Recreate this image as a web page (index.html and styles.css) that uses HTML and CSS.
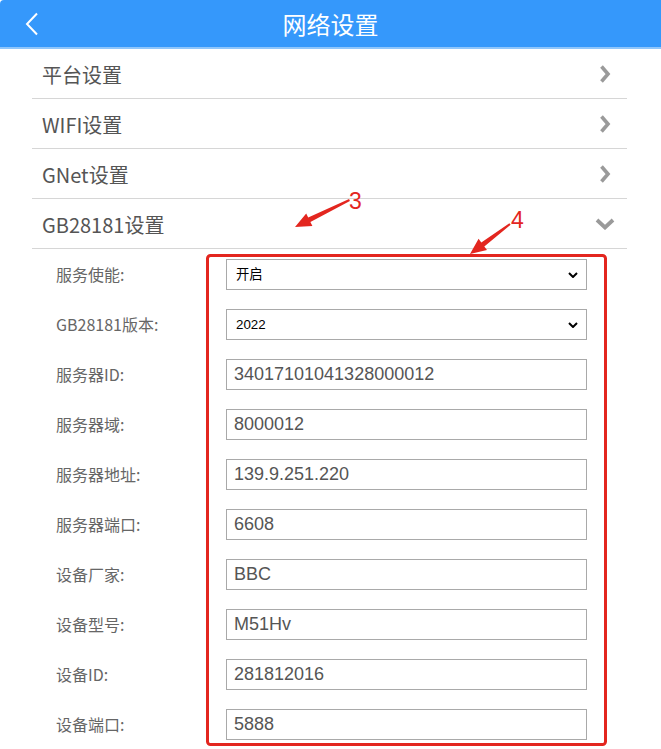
FILE: index.html
```html
<!DOCTYPE html>
<html lang="zh-CN">
<head>
<meta charset="utf-8">
<title>网络设置</title>
<link rel="stylesheet" href="styles.css">
</head>
<body>
<header class="topbar">
  <span class="back">
    <svg width="14" height="24" viewBox="0 0 14 24"><polyline points="12,1.5 2,12 12,22.5" fill="none" stroke="#fff" stroke-width="2"/></svg>
  </span>
  <h1 class="title">网络设置</h1>
  <span></span>
</header>

<ul class="menu">
  <li class="menu-item"><span>平台设置</span><span class="chev"><svg width="12" height="18" viewBox="0 0 12 18"><polyline points="2.5,1.5 9,9 2.5,16.5" fill="none" stroke="#9a9a9a" stroke-width="3.6"/></svg></span></li>
  <li class="menu-item"><span>WIFI设置</span><span class="chev"><svg width="12" height="18" viewBox="0 0 12 18"><polyline points="2.5,1.5 9,9 2.5,16.5" fill="none" stroke="#9a9a9a" stroke-width="3.6"/></svg></span></li>
  <li class="menu-item"><span>GNet设置</span><span class="chev"><svg width="12" height="18" viewBox="0 0 12 18"><polyline points="2.5,1.5 9,9 2.5,16.5" fill="none" stroke="#9a9a9a" stroke-width="3.6"/></svg></span></li>
  <li class="menu-item"><span>GB28181设置</span><span class="chev"><svg width="20" height="12" viewBox="0 0 20 12"><polyline points="2,2 10,9.5 18,2" fill="none" stroke="#9a9a9a" stroke-width="3.8"/></svg></span></li>
</ul>

<div class="gb-form">
  <div class="form-row">
    <label class="form-label">服务使能:</label>
    <div class="select-wrap">
      <select class="form-select"><option>开启</option></select>
      <svg class="select-arrow" width="10" height="6" viewBox="0 0 10 6"><polyline points="1,1 5,5 9,1" fill="none" stroke="#000" stroke-width="2"/></svg>
    </div>
  </div>
  <div class="form-row">
    <label class="form-label">GB28181版本:</label>
    <div class="select-wrap">
      <select class="form-select"><option>2022</option></select>
      <svg class="select-arrow" width="10" height="6" viewBox="0 0 10 6"><polyline points="1,1 5,5 9,1" fill="none" stroke="#000" stroke-width="2"/></svg>
    </div>
  </div>
  <div class="form-row">
    <label class="form-label">服务器ID:</label>
    <input class="form-input" type="text" value="34017101041328000012">
  </div>
  <div class="form-row">
    <label class="form-label">服务器域:</label>
    <input class="form-input" type="text" value="8000012">
  </div>
  <div class="form-row">
    <label class="form-label">服务器地址:</label>
    <input class="form-input" type="text" value="139.9.251.220">
  </div>
  <div class="form-row">
    <label class="form-label">服务器端口:</label>
    <input class="form-input" type="text" value="6608">
  </div>
  <div class="form-row">
    <label class="form-label">设备厂家:</label>
    <input class="form-input" type="text" value="BBC">
  </div>
  <div class="form-row">
    <label class="form-label">设备型号:</label>
    <input class="form-input" type="text" value="M51Hv">
  </div>
  <div class="form-row">
    <label class="form-label">设备ID:</label>
    <input class="form-input" type="text" value="281812016">
  </div>
  <div class="form-row">
    <label class="form-label">设备端口:</label>
    <input class="form-input" type="text" value="5888">
  </div>
</div>

<svg class="annot" width="661" height="749" viewBox="0 0 661 749">
  <rect x="207.5" y="255.5" width="398" height="489" rx="3" fill="none" stroke="#e3261f" stroke-width="3"/>
  <polygon points="349.1,199.1 308.2,217.6 306.2,213.5 295,227 312.4,226.1 310.4,222.0 349.9,200.9" fill="#e3261f"/>
  <polygon points="509.4,223.2 481.3,242.4 478.6,238.8 470,254 487.0,250.0 484.3,246.4 510.6,224.8" fill="#e3261f"/>
  <text x="349" y="209" class="annot-num">3</text>
  <text x="511" y="228" class="annot-num">4</text>
</svg>
</body>
</html>
```

FILE: styles.css
```css
html, body {
  margin: 0;
  padding: 0;
  background: #fff;
}

body {
  position: relative;
  width: 661px;
  height: 749px;
  overflow: hidden;
  font-family: "Noto Sans CJK SC", "Liberation Sans", sans-serif;
}

.topbar {
  height: 47px;
  background: #3598fb;
  border-bottom: 2px solid #8fc6fb;
  display: grid;
  grid-template-columns: 1fr auto 1fr;
  align-items: center;
  border-top-left-radius: 4px;
}

.back {
  padding-left: 25px;
  display: flex;
  align-items: center;
  padding-top: 1px;
}

.title {
  margin: 0;
  color: #fff;
  font-size: 24px;
  font-weight: normal;
  line-height: 1;
}

.menu {
  list-style: none;
  margin: 0 34px 0 32px;
  padding: 0;
}

.menu-item {
  height: 50px;
  box-sizing: border-box;
  border-bottom: 1px solid #d6d6d6;
  display: flex;
  align-items: center;
  justify-content: space-between;
  padding: 1px 12px 0 10px;
  font-size: 20px;
  color: #555;
}

.chev {
  width: 20px;
  display: flex;
  justify-content: center;
  align-items: center;
}

.gb-form {
  display: flex;
  flex-direction: column;
}

.form-row {
  height: 50px;
  box-sizing: border-box;
  padding: 10px 0 0 56px;
  display: flex;
  align-items: flex-start;
}

.form-label {
  width: 170px;
  height: 31px;
  line-height: 31px;
  font-size: 16px;
  color: #666;
}

.form-input,
.select-wrap {
  width: 361px;
  height: 31px;
  box-sizing: border-box;
}

.form-input {
  margin: 0;
  border: 1px solid #a9a9a9;
  border-radius: 0;
  padding: 0 7px;
  font-family: "Liberation Sans", Arial, sans-serif;
  font-size: 18px;
  color: #555;
  background: #fff;
  outline: none;
}

.select-wrap {
  position: relative;
}

.form-select {
  appearance: none;
  -webkit-appearance: none;
  width: 100%;
  height: 100%;
  margin: 0;
  border: 1px solid #a9a9a9;
  border-radius: 0;
  padding: 0 9px;
  background: #fff;
  font-family: "Liberation Sans", "Noto Sans CJK SC", sans-serif;
  font-size: 13.33px;
  color: #000;
  outline: none;
}

.select-arrow {
  position: absolute;
  right: 9px;
  top: 13px;
  pointer-events: none;
}

.annot {
  position: absolute;
  top: 0;
  left: 0;
  pointer-events: none;
}

.annot-num {
  font-family: "Liberation Sans", Arial, sans-serif;
  font-size: 23px;
  fill: #e3261f;
}
```
